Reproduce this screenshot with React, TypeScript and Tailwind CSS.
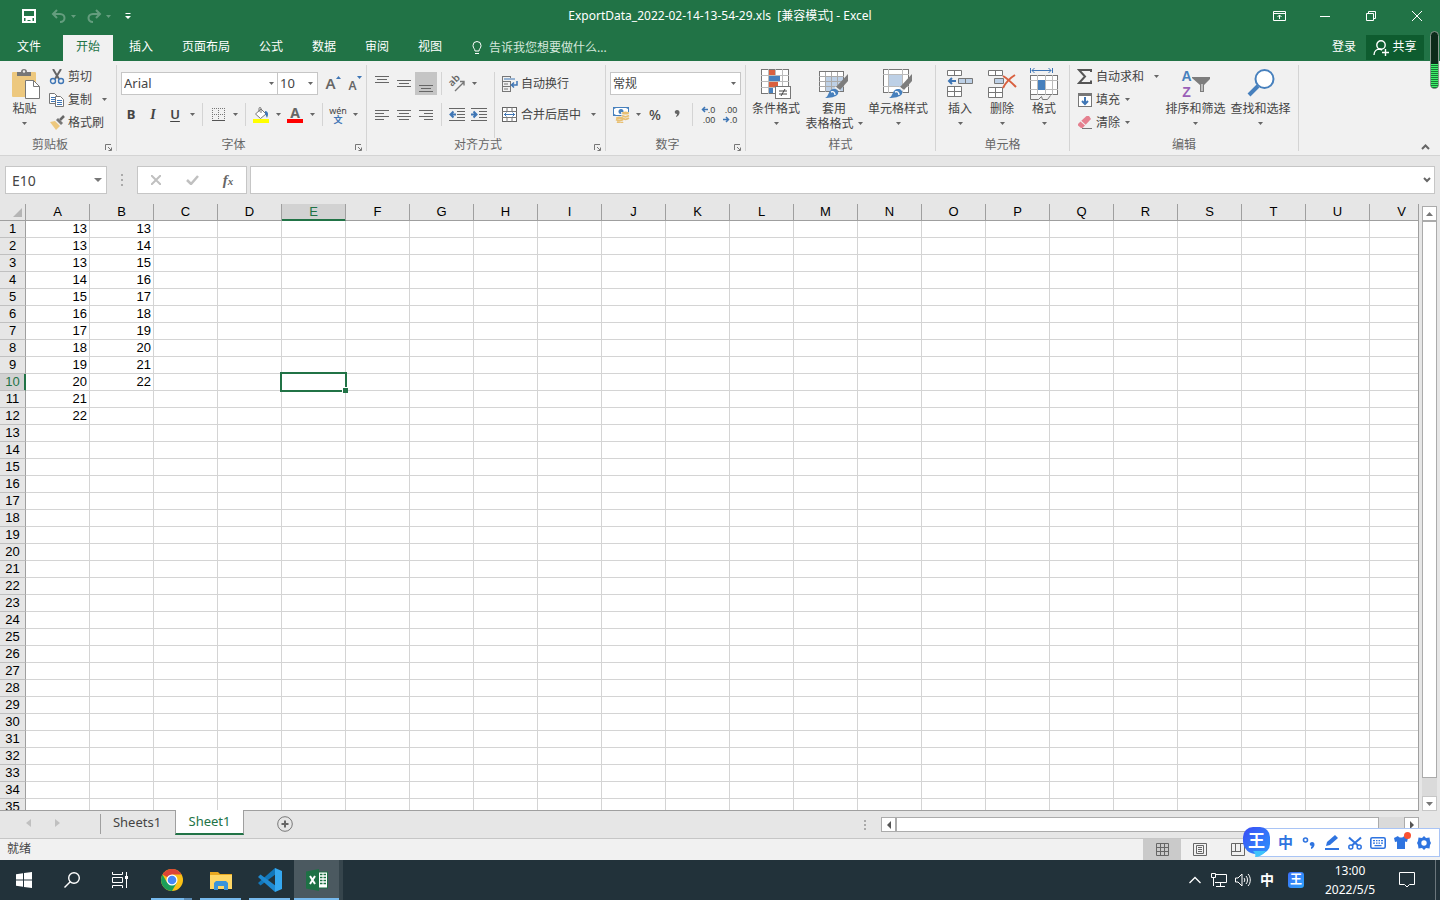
import { useState, type ReactNode } from 'react'

const TABS = ['开始', '插入', '页面布局', '公式', '数据', '审阅', '视图']
const COLUMNS = 'ABCDEFGHIJKLMNOPQRSTUV'.split('')
const ROWS = Array.from({ length: 35 }, (_, i) => i + 1)
const DATA: Record<string, number[]> = {
  A: [13, 13, 13, 14, 15, 16, 17, 18, 19, 20, 21, 22],
  B: [13, 14, 15, 16, 17, 18, 19, 20, 21, 22],
}
const ACTIVE = { col: 'E', row: 10 }

function Caret({ className = 'fill-[#666]' }: { className?: string }) {
  return (
    <svg width="5" height="3" viewBox="0 0 5 3" className={`shrink-0 ${className}`} aria-hidden="true">
      <path d="M0 0h5L2.5 3z" />
    </svg>
  )
}

function Icon({ w = 16, h = 16, children }: { w?: number; h?: number; children: ReactNode }) {
  return (
    <svg width={w} height={h} viewBox={`0 0 ${w} ${h}`} fill="none" className="shrink-0" aria-hidden="true">
      {children}
    </svg>
  )
}

function Tool({ label, active, children }: { label: string; active?: boolean; children: ReactNode }) {
  return (
    <button
      aria-label={label}
      className={`flex h-[23px] w-[22px] shrink-0 items-center justify-center ${active ? 'bg-[#c5c5c5]' : 'hover:bg-[#d5d5d5]'}`}
    >
      {children}
    </button>
  )
}

function DropArrow({ label }: { label: string }) {
  return (
    <button aria-label={label} className="flex h-[23px] w-3 shrink-0 items-center justify-center hover:bg-[#d5d5d5]">
      <Caret />
    </button>
  )
}

function Sep() {
  return <span className="mx-1 w-px shrink-0 self-stretch bg-[#d4d4d4]" />
}

function Group({ title, width, launcher, children }: { title: string; width: string; launcher?: boolean; children: ReactNode }) {
  return (
    <section aria-label={title} className={`flex h-[86px] shrink-0 flex-col border-r border-[#d4d4d4] ${width}`}>
      <div className="flex flex-1">{children}</div>
      <div className="flex h-[13px] items-center text-[#666]">
        <span className="flex-1 text-center leading-[13px]">{title}</span>
        {launcher && (
          <button aria-label={`${title}设置`} className="flex w-4 justify-center self-end">
            <Icon w={7} h={7}>
              <path d="M.5 6V.5H6M3 3l3 3M6.5 3.5v3h-3" stroke="#777" />
            </Icon>
          </button>
        )}
      </div>
    </section>
  )
}

function SmallButton({ icon, text, arrow }: { icon: ReactNode; text: string; arrow?: boolean }) {
  return (
    <button className="flex h-[23px] items-center gap-[3px] whitespace-nowrap hover:bg-[#d5d5d5]">
      {icon}
      <span>{text}</span>
      {arrow && <span className="pl-[2px]"><Caret /></span>}
    </button>
  )
}

function BigButton({ icon, text, second, width }: { icon: ReactNode; text: string; second?: string; width: string }) {
  return (
    <button className={`flex shrink-0 flex-col items-center whitespace-nowrap pt-1 leading-[15px] hover:bg-[#d5d5d5] ${width}`}>
      <span className="flex h-[30px] items-center">{icon}</span>
      <span className="mt-[2px]">{text}</span>
      <span className="flex h-[15px] items-center gap-1">
        {second}
        <Caret />
      </span>
    </button>
  )
}

function Lines({ y, widths, align = 'center' }: { y: number; widths: number[]; align?: 'left' | 'center' | 'right' }) {
  return (
    <Icon w={14} h={16}>
      {widths.map((w, i) => (
        <rect
          key={i}
          x={align === 'left' ? 0 : align === 'right' ? 14 - w : (14 - w) / 2}
          y={y + i * 3}
          width={w}
          height="1"
          fill="#666"
        />
      ))}
    </Icon>
  )
}

function Indent({ out }: { out?: boolean }) {
  return (
    <Icon w={16} h={14}>
      <path d="M0 .5h16M8 3.500h8M8 6.500h8M8 9.500h8M0 12.500h16" stroke="#666" />
      {out ? (
        <path d="M7 6.500H2M4.500 3.500l-3 3 3 3" stroke="#3f76b5" strokeWidth="2" />
      ) : (
        <path d="M0 6.500h5M2.500 3.500l3 3-3 3" stroke="#3f76b5" strokeWidth="2" />
      )}
    </Icon>
  )
}

function Brush() {
  return (
    <g>
      <path d="M29 5v7l-8 9-4-3z" fill="#7d7d7d" />
      <path d="M16 18l5 4" stroke="#f1f1f1" strokeWidth="1.5" />
      <path d="M6 29c4-1 3-9 9-9 3 0 5 2 4 5-2 3-8 4-13 4z" fill="#4780bd" />
      <path d="M12 23c2-1 4 0 4 3" stroke="#fff" strokeWidth="1.4" />
    </g>
  )
}

function Clipboard() {
  return (
    <Group title="剪贴板" width="w-[117px]" launcher>
      <BigButton
        width="w-[49px]"
        text="粘贴"
        icon={
          <Icon w={30} h={30}>
            <rect x="2" y="3" width="24" height="25" rx="1" fill="#edc87e" />
            <path d="M7 7V3h4a3 3 0 0 1 6 0h4v4z" fill="#777" />
            <circle cx="14" cy="2.5" r="1.2" fill="#f1f1f1" />
            <path d="M15.500 11.500h8l6 6v12h-14z" fill="#fff" stroke="#777" />
            <path d="M23.500 11.500v6h6" stroke="#777" />
          </Icon>
        }
      />
      <div className="flex flex-col items-start">
        <SmallButton
          text="剪切"
          icon={
            <Icon>
              <path d="M4 0l6 10M12 0L6 10" stroke="#666" strokeWidth="2" />
              <circle cx="4" cy="12" r="2.500" stroke="#3f76b5" strokeWidth="1.400" />
              <circle cx="12" cy="12" r="2.500" stroke="#3f76b5" strokeWidth="1.400" />
            </Icon>
          }
        />
        <div className="flex items-center">
          <SmallButton
            text="复制"
            icon={
              <Icon>
                <path d="M.5 1.500h5l3 3v7h-8z" fill="#fff" stroke="#777" />
                <path d="M2 5.500h4M2 7.500h4M2 9.500h4" stroke="#3f76b5" />
                <path d="M6.500 4.500h5l3 3v7h-8z" fill="#fff" stroke="#777" />
                <path d="M8 8.500h5M8 10.500h5M8 12.500h5" stroke="#3f76b5" />
              </Icon>
            }
          />
          <span className="pl-1.5">
            <DropArrow label="复制选项" />
          </span>
        </div>
        <SmallButton
          text="格式刷"
          icon={
            <Icon>
              <path d="M1 7l5-1 5 5-4 4z" fill="#edc87e" />
              <path d="M7 5l2-2 5 5-2 2z" fill="#777" />
              <path d="M11 5l4-4" stroke="#666" strokeWidth="2.500" />
            </Icon>
          }
        />
      </div>
    </Group>
  )
}

function FontGroup() {
  return (
    <Group title="字体" width="w-[250px]" launcher>
      <div className="flex flex-col gap-2 pl-[3px] pt-[7px]">
        <div className="flex h-[23px] pl-px">
          <div className="relative flex w-[157px] items-center">
            <select aria-label="字体" className="h-full w-full appearance-none border border-[#c6c6c6] bg-white px-[2px] text-[13px]">
              <option>Arial</option>
            </select>
            <span className="pointer-events-none absolute right-1"><Caret /></span>
          </div>
          <div className="relative -ml-px flex w-[41px] items-center">
            <select aria-label="字号" className="h-full w-full appearance-none border border-[#c6c6c6] bg-white px-[2px] text-[13px]">
              <option>10</option>
            </select>
            <span className="pointer-events-none absolute right-[5px]"><Caret /></span>
          </div>
          <span className="w-1" />
          <Tool label="增大字号">
            <span className="text-[15px] font-semibold text-[#666]">A</span>
            <span className="self-start pt-1"><Icon w={5} h={3}><path d="M0 3h5L2.500 0z" fill="#3f76b5" /></Icon></span>
          </Tool>
          <Tool label="减小字号">
            <span className="pt-1 text-[12px] font-semibold text-[#666]">A</span>
            <span className="self-start pt-1"><Caret className="fill-[#3f76b5]" /></span>
          </Tool>
        </div>
        <div className="flex">
          <Tool label="加粗"><b className="text-[13px]">B</b></Tool>
          <Tool label="倾斜"><i className="font-['Liberation_Serif',serif] text-[14px] font-bold">I</i></Tool>
          <Tool label="下划线"><span className="text-[13px] font-semibold underline underline-offset-2">U</span></Tool>
          <DropArrow label="下划线选项" />
          <Sep />
          <Tool label="边框">
            <Icon w={13} h={14}>
              <path d="M.5 0v12M6.500 0v12M12.500 0v12M0 .5h13M0 6.500h13" stroke="#777" strokeDasharray="1 1" />
              <path d="M0 12.500h13" stroke="#555" />
            </Icon>
          </Tool>
          <DropArrow label="边框选项" />
          <Sep />
          <Tool label="填充颜色">
            <Icon w={16} h={16}>
              <path d="M2.500 7L8 2l5 5-5.500 4.500z" fill="#fff" stroke="#777" />
              <path d="M6 5V1.500a1 1 0 0 1 2 0V6" stroke="#777" />
              <path d="M12 4c3 0 4 3 2 7-1-2-1-3-2-4z" fill="#3f76b5" />
              <rect y="12" width="16" height="4" fill="#ff0" />
            </Icon>
          </Tool>
          <DropArrow label="填充颜色选项" />
          <Tool label="字体颜色">
            <span className="border-b-4 border-[#f00] px-[3px] text-[14px] font-bold leading-[13px] text-[#666]">A</span>
          </Tool>
          <DropArrow label="字体颜色选项" />
          <Sep />
          <button aria-label="拼音指南" className="flex h-[23px] w-[22px] flex-col items-center justify-center hover:bg-[#d5d5d5]">
            <span className="text-[9px] leading-[9px]">wén</span>
            <span className="text-[9px] font-bold leading-[9px] text-[#3f76b5]">文</span>
          </button>
          <DropArrow label="拼音选项" />
        </div>
      </div>
    </Group>
  )
}

function AlignGroup() {
  return (
    <Group title="对齐方式" width="w-[239px]" launcher>
      <div className="flex items-start pl-1 pt-[7px]">
        <div className="flex flex-col gap-2">
          <div className="flex">
            <Tool label="顶端对齐"><Lines y={0} widths={[14, 10, 14]} /></Tool>
            <Tool label="垂直居中"><Lines y={4} widths={[14, 10, 14]} /></Tool>
            <Tool label="底端对齐" active><Lines y={9} widths={[14, 10, 14]} /></Tool>
            <Sep />
            <Tool label="方向">
              <Icon w={18} h={18}>
                <text x="4" y="12" transform="rotate(-45 4 12)" fontSize="10" fontWeight="600" fill="#666">ab</text>
                <path d="M7 16l9-9M12 6.500h4v4" stroke="#777" strokeWidth="1.400" />
              </Icon>
            </Tool>
            <DropArrow label="方向选项" />
          </div>
          <div className="flex">
            <Tool label="左对齐"><Lines y={3} widths={[14, 9, 14, 9]} align="left" /></Tool>
            <Tool label="居中"><Lines y={3} widths={[14, 10, 14, 10]} /></Tool>
            <Tool label="右对齐"><Lines y={3} widths={[14, 9, 14, 9]} align="right" /></Tool>
            <Sep />
            <Tool label="减少缩进量"><Indent out /></Tool>
            <Tool label="增加缩进量"><Indent /></Tool>
          </div>
        </div>
        <Sep />
        <div className="flex flex-col items-start gap-2 pl-[3px]">
          <SmallButton
            text="自动换行"
            icon={
              <Icon>
                <path d="M.5 0v16M0 .5h9M0 5.500h9M0 10.500h9M0 15.500h9M8.500 5v11M8.500 0v2" stroke="#777" />
                <path d="M2 3h11" stroke="#3f76b5" />
                <path d="M2 8h4M2 13h4" stroke="#777" />
                <path d="M15 5v4h-5M12 6.500L9.500 9l2.500 2.500" stroke="#3f76b5" strokeWidth="1.500" />
              </Icon>
            }
          />
          <div className="flex items-center">
            <SmallButton
              text="合并后居中"
              icon={
                <Icon>
                  <rect x=".5" y=".5" width="14" height="14" fill="#fff" stroke="#666" />
                  <path d="M0 4.500h15M0 10.500h15M5 0v4M10 0v4M5 11v4M10 11v4" stroke="#777" />
                  <path d="M2 7.500h11M4.500 5.500l-2 2 2 2M10.500 5.500l2 2-2 2" stroke="#3f76b5" />
                </Icon>
              }
            />
            <span className="pl-1.5"><DropArrow label="合并选项" /></span>
          </div>
        </div>
      </div>
    </Group>
  )
}

function NumberGroup() {
  return (
    <Group title="数字" width="w-[140px]" launcher>
      <div className="flex flex-col gap-2 pl-1 pt-[7px]">
        <div className="relative flex h-[23px] w-[131px] items-center">
          <select aria-label="数字格式" className="h-full w-full appearance-none border border-[#c6c6c6] bg-white px-[2px]">
            <option>常规</option>
          </select>
          <span className="pointer-events-none absolute right-[5px]"><Caret /></span>
        </div>
        <div className="flex">
          <Tool label="会计数字格式">
            <Icon w={18} h={17}>
              <rect x="1" y="1" width="16" height="9" fill="#4780bd" />
              <path d="M2 3l2-1h10l2 1v4l-2 2H4L2 8z" fill="#fff" />
              <circle cx="9" cy="5.500" r="2.500" fill="#4780bd" />
              <path d="M9 6h8v7a4 2 0 0 1-7 0z" fill="#f1f1f1" />
              <ellipse cx="13.500" cy="7" rx="3.500" ry="1.500" fill="#e8bf72" />
              <path d="M10 9.500c2 1.500 5 1.500 7 0M10 12c2 1.500 5 1.500 7 0M4 13.500c2 1.500 5 1.500 7 0M5 16c2 1 5 1 6 0" stroke="#e8bf72" strokeWidth="1.600" />
              <ellipse cx="7.500" cy="12" rx="3.500" ry="1.500" fill="#e8bf72" />
            </Icon>
          </Tool>
          <DropArrow label="会计格式选项" />
          <Tool label="百分比样式"><span className="text-[14px] font-medium">%</span></Tool>
          <Tool label="千位分隔样式">
            <Icon w={6} h={10}><path d="M3 0c4 0 3 6-1 7V6c1-1 1-1 1-2-3 0-3-4 0-4z" fill="#666" /></Icon>
          </Tool>
          <Sep />
          <Tool label="增加小数位数">
            <span className="flex flex-col items-end font-['Liberation_Sans',Arial,sans-serif] text-[9px] leading-[10px]">
              <span className="flex items-center"><Icon w={7} h={7}><path d="M7 3.500H2M4 1L1.500 3.500 4 6" stroke="#3f76b5" strokeWidth="1.500" /></Icon>.0</span>
              <span>.00</span>
            </span>
          </Tool>
          <Tool label="减少小数位数">
            <span className="flex flex-col items-end font-['Liberation_Sans',Arial,sans-serif] text-[9px] leading-[10px]">
              <span>.00</span>
              <span className="flex items-center"><Icon w={7} h={7}><path d="M0 3.500h5M3 1l2.500 2.500L3 6" stroke="#3f76b5" strokeWidth="1.500" /></Icon>.0</span>
            </span>
          </Tool>
        </div>
      </div>
    </Group>
  )
}

function StyleGroup() {
  return (
    <Group title="样式" width="w-[190px]">
      <BigButton
        width="w-[60px]"
        text="条件格式"
        icon={
          <Icon w={30} h={30}>
            <rect x=".5" y=".5" width="27" height="24" fill="#fff" stroke="#777" />
            <path d="M0 6.500h28M0 12.500h28M0 18.500h28M7.500 0v25M14.500 0v25M21.500 0v25" stroke="#bbb" />
            <path d="M8 1h6v5H8zM8 13h9v5H8z" fill="#d9603f" />
            <path d="M8 7h11v5H8zM8 19h4v5H8z" fill="#4780bd" />
            <rect x="14.500" y="17.500" width="15" height="12" fill="#fff" stroke="#777" />
            <path d="M18 22h8M18 25h8M24 20l-4 7" stroke="#444" />
          </Icon>
        }
      />
      <BigButton
        width="w-[56px]"
        text="套用"
        second="表格格式"
        icon={
          <Icon w={30} h={30}>
            <rect x=".5" y="2.500" width="24" height="20" fill="#fff" stroke="#777" />
            <path d="M6 8h18v14H6z" fill="#bdd0e6" />
            <path d="M0 7.500h25M0 12.500h25M0 17.500h25M6.500 3v20M12.500 3v20M18.500 3v20" stroke="#aaa" />
            <Brush />
          </Icon>
        }
      />
      <BigButton
        width="w-[72px]"
        text="单元格样式"
        icon={
          <Icon w={30} h={30}>
            <rect x=".5" y=".5" width="25" height="23" fill="#fff" stroke="#777" />
            <path d="M0 5.500h26M0 17.500h26M5.500 0v24M19.500 0v24" stroke="#bbb" />
            <rect x="6" y="6" width="13" height="11" fill="#bdd0e6" />
            <Brush />
          </Icon>
        }
      />
    </Group>
  )
}

function CellsGroup() {
  return (
    <Group title="单元格" width="w-[134px]">
      <div className="flex pl-[3px]">
        <BigButton
          width="w-[42px]"
          text="插入"
          icon={
            <Icon w={28} h={30}>
              <path d="M1.500 1.500h14v5h-14zM8.500 1v6M1.500 17.500h14v10h-14zM1 22.500h15M8.500 17v11" fill="#fff" stroke="#777" />
              <path d="M12.500 9.500h14v5h-14zM19.500 9v6" fill="#bdd0e6" stroke="#777" />
              <path d="M10 12H4M6 9l-3 3 3 3" stroke="#3f76b5" strokeWidth="2" />
            </Icon>
          }
        />
        <BigButton
          width="w-[42px]"
          text="删除"
          icon={
            <Icon w={30} h={30}>
              <path d="M1.500 1.500h14v5h-14zM8.500 1v6M1.500 18.500h14v10h-14zM1 23.500h15M8.500 18v11" fill="#fff" stroke="#777" />
              <path d="M7.500 9.500h9v5h-9z" fill="#bdd0e6" stroke="#777" />
              <path d="M16 7c5 3 9 7 13 11M28 6c-5 3-9 7-12 13" stroke="#d9603f" strokeWidth="2" />
            </Icon>
          }
        />
        <BigButton
          width="w-[42px]"
          text="格式"
          icon={
            <Icon w={28} h={32}>
              <path d="M.5 0v5M22.500 0v5M2 2.500h19M4.500 0L2 2.500 4.500 5M18.500 0L21 2.500 18.500 5" stroke="#3f76b5" />
              <rect x=".5" y="7.500" width="27" height="19" fill="#fff" stroke="#777" />
              <path d="M0 12.500h28M0 21.500h28M7.500 7v20M15.500 7v20M22.500 7v20" stroke="#bbb" />
              <rect x="8" y="12" width="7" height="10" fill="#4780bd" />
              <path d="M.5 27v4.500h8l3-3 1 3h5l3-4" stroke="#777" />
            </Icon>
          }
        />
      </div>
    </Group>
  )
}

function EditGroup() {
  return (
    <Group title="编辑" width="w-[229px]">
      <div className="flex w-[93px] flex-col items-start pl-[7px]">
        <div className="flex items-center">
          <SmallButton
            text="自动求和"
            icon={<Icon><path d="M14 3V1H2l6 6.500L2 14h12v-2.500" stroke="#555" strokeWidth="2" /></Icon>}
          />
          <span className="pl-1.5"><DropArrow label="求和选项" /></span>
        </div>
        <SmallButton
          text="填充"
          arrow
          icon={
            <Icon>
              <rect x="1.500" y="1.500" width="13" height="13" fill="#fff" stroke="#777" />
              <rect x="1" y="1" width="14" height="3" fill="#777" />
              <path d="M8 5v7M5 9l3 3 3-3" stroke="#3f76b5" strokeWidth="2" />
            </Icon>
          }
        />
        <SmallButton
          text="清除"
          arrow
          icon={
            <Icon>
              <path d="M1 9l2.500-2.500 4.500 4L5.500 13H4L1 10.500z" fill="#e5808f" />
              <path d="M4.300 5.700L9.500 1H12l2 3-5.300 5.800z" fill="#e5808f" />
              <path d="M5 13.500h10" stroke="#777" />
            </Icon>
          }
        />
      </div>
      <BigButton
        width="w-[65px]"
        text="排序和筛选"
        icon={
          <span className="flex items-center">
            <span className="flex flex-col items-center font-['Liberation_Sans',Arial,sans-serif] text-[14px] font-bold leading-4">
              <span className="text-[#4780bd]">A</span>
              <span className="text-[#9a5fb8]">Z</span>
            </span>
            <Icon w={18} h={16}>
              <path d="M0 1h18v2l-6 6v7H8V9L0 2z" fill="#7d7d7d" />
              <path d="M9.500 8h1v7h-1z" fill="#fff" />
            </Icon>
          </span>
        }
      />
      <BigButton
        width="w-[65px]"
        text="查找和选择"
        icon={
          <Icon w={28} h={30}>
            <circle cx="17.500" cy="10" r="9" fill="#fff" stroke="#4780bd" strokeWidth="2" />
            <path d="M11 17l-9 9" stroke="#4780bd" strokeWidth="4" />
          </Icon>
        }
      />
    </Group>
  )
}

function TitleBar() {
  return (
    <header className="flex h-[35px] shrink-0 items-center pb-[3px] text-white">
      <div className="flex-1">
        <div className="flex items-center gap-[10px] pl-[22px]">
          <button aria-label="保存" className="w-[19px]">
            <Icon w={14} h={14}>
              <path d="M1 1h12v12H1zM1 8h12M4.500 13v-3h5v3" stroke="#fff" strokeWidth="2" />
            </Icon>
          </button>
          <button aria-label="撤消" className="flex items-center gap-1 opacity-30">
            <Icon w={16} h={14}>
              <path d="M6 1L2 5l4 4M2 5h7c6 0 6 8 0 8" stroke="#fff" strokeWidth="2" />
            </Icon>
            <Caret className="fill-white" />
          </button>
          <button aria-label="恢复" className="flex items-center gap-1 opacity-30">
            <Icon w={16} h={14}>
              <path d="M10 1l4 4-4 4M14 5H7c-6 0-6 8 0 8" stroke="#fff" strokeWidth="2" />
            </Icon>
            <Caret className="fill-white" />
          </button>
          <button aria-label="自定义快速访问工具栏" className="pl-1">
            <Icon w={6} h={6}><path d="M.5 0h5v1h-5zM0 3h6L3 6z" fill="#fff" /></Icon>
          </button>
        </div>
      </div>
      <h1 className="whitespace-pre">ExportData_2022-02-14-13-54-29.xls  [兼容模式] - Excel</h1>
      <div className="flex flex-1 justify-end">
        <button aria-label="功能区显示选项" className="flex h-[30px] w-[46px] items-center justify-center">
          <Icon w={13} h={10}><path d="M.5.5h12v9H.5zM0 2.500h13M6.500 8V4M4.500 6l2-2 2 2" stroke="#fff" /></Icon>
        </button>
        <button aria-label="最小化" className="flex h-[30px] w-[46px] items-center justify-center">
          <Icon w={10} h={10}><path d="M0 5.500h10" stroke="#fff" /></Icon>
        </button>
        <button aria-label="还原" className="flex h-[30px] w-[46px] items-center justify-center">
          <Icon w={10} h={10}><path d="M.5 2.500h7v7h-7zM2.500 2.500v-2h7v7h-2" stroke="#fff" /></Icon>
        </button>
        <button aria-label="关闭" className="flex h-[30px] w-[46px] items-center justify-center">
          <Icon w={10} h={10}><path d="M0 0l10 10M10 0L0 10" stroke="#fff" /></Icon>
        </button>
      </div>
    </header>
  )
}

function RibbonTabs() {
  const [tab, setTab] = useState(TABS[0])
  return (
    <nav className="flex h-[26px] shrink-0 items-stretch text-white">
      <button className="mr-[5px] w-[58px] pb-[2px]">文件</button>
      <div className="flex gap-[3px]">
        {TABS.map(name => (
          <button
            key={name}
            onClick={() => setTab(name)}
            className={`whitespace-nowrap px-[13px] pb-[2px] ${tab === name ? 'bg-[#f1f1f1] text-[#217346]' : 'hover:bg-[#3b8a5d]'}`}
          >
            {name}
          </button>
        ))}
      </div>
      <button className="ml-4 flex items-center gap-1.5 text-[#d5e8dc]">
        <Icon w={12} h={14}>
          <path d="M4 10c0-2-2-3-2-5.500a4 4 0 0 1 8 0C10 7 8 8 8 10zM4 12.500h4" stroke="#fff" />
        </Icon>
        告诉我您想要做什么...
      </button>
      <div className="ml-auto flex pr-4">
        <button className="px-[10px] pb-[2px]">登录</button>
        <button className="flex h-[25px] w-[58px] items-center justify-center gap-[3px] bg-[#0e5c2f]">
          <Icon w={16} h={16}>
            <circle cx="8" cy="5" r="4.200" stroke="#fff" strokeWidth="1.400" />
            <path d="M1 15c0-4 3-6 6-6l2 1M12.500 9v7M9 12.500h7" stroke="#fff" strokeWidth="1.400" />
          </Icon>
          <span className="pb-[2px]">共享</span>
        </button>
      </div>
    </nav>
  )
}

function FormulaBar() {
  return (
    <div className="flex h-12 shrink-0 items-center gap-[3px] px-[5px]">
      <div className="relative flex w-[102px] items-center">
        <input aria-label="名称框" defaultValue="E10" className="h-7 w-full border border-[#c6c6c6] bg-white px-1.5 text-[14px] text-[#444] outline-none" />
        <button aria-label="名称列表" className="absolute right-[5px]">
          <svg width="8" height="4" viewBox="0 0 8 4" className="fill-[#777]"><path d="M0 0h8L4 4z" /></svg>
        </button>
      </div>
      <span className="flex w-6 justify-center">
        <Icon w={2} h={12}><path d="M1 0v2M1 5v2M1 10v2" stroke="#aaa" strokeWidth="2" /></Icon>
      </span>
      <div className="flex h-7 w-[110px] items-center border border-[#c6c6c6] bg-white">
        <button aria-label="取消" className="flex flex-1 justify-center"><Icon w={10} h={10}><path d="M0 0l10 10M10 0L0 10" stroke="#c0c0c0" strokeWidth="2" /></Icon></button>
        <button aria-label="输入" className="flex flex-1 justify-center"><Icon w={13} h={10}><path d="M1 5l4 4 7-8" stroke="#c0c0c0" strokeWidth="2.500" /></Icon></button>
        <button aria-label="插入函数" className="flex-1 font-['Liberation_Serif',serif] text-[15px] font-bold italic text-[#666]">f<span className="text-[11px]">x</span></button>
      </div>
      <div className="relative flex flex-1 items-center">
        <input aria-label="编辑栏" className="h-7 w-full border border-[#c6c6c6] bg-white px-1.5 outline-none" />
        <button aria-label="展开编辑栏" className="absolute right-1">
          <Icon w={8} h={6}><path d="M1 1l3 3 3-3" stroke="#666" strokeWidth="2" /></Icon>
        </button>
      </div>
    </div>
  )
}

function Sheet() {
  return (
    <div className="flex min-h-0 flex-1">
      <div className="min-w-0 flex-1 overflow-hidden border-b border-r border-[#9f9f9f]">
        <table className="w-[1434px] table-fixed border-separate border-spacing-0 bg-white font-['Liberation_Sans',Arial,sans-serif] text-[13px] leading-4 text-black">
          <colgroup>
            <col className="w-[26px]" />
            {COLUMNS.map(c => <col key={c} className="w-16" />)}
          </colgroup>
          <thead>
            <tr>
              <th aria-label="全选" className="h-[17px] border-b border-r border-[#9f9f9f] bg-[#e6e6e6] p-0">
                <span className="flex justify-end pr-[3px]"><Icon w={9} h={9}><path d="M9 0v9H0z" fill="#b5b5b5" /></Icon></span>
              </th>
              {COLUMNS.map(c => (
                <th
                  key={c}
                  className={`h-[17px] border-b border-r p-0 font-normal ${
                    c === ACTIVE.col
                      ? 'border-b-[#217346] border-r-[#9f9f9f] bg-[#d2d2d2] text-[#217346] shadow-[inset_0_-1px_0_#217346]'
                      : 'border-[#9f9f9f] bg-[#e6e6e6]'
                  }`}
                >
                  {c}
                </th>
              ))}
            </tr>
          </thead>
          <tbody>
            {ROWS.map(r => (
              <tr key={r}>
                <th
                  className={`h-[17px] border-b border-r border-b-[#c0c0c0] p-0 font-normal ${
                    r === ACTIVE.row
                      ? 'border-r-[#217346] bg-[#d2d2d2] text-[#217346] shadow-[inset_-1px_0_0_#217346]'
                      : 'border-r-[#9f9f9f] bg-[#e6e6e6]'
                  }`}
                >
                  {r}
                </th>
                {COLUMNS.map(c => (
                  <td key={c} className="relative h-[17px] border-b border-r border-[#d4d4d4] p-0 pr-[2px] text-right">
                    {DATA[c]?.[r - 1]}
                    {c === ACTIVE.col && r === ACTIVE.row && (
                      <span className="absolute -inset-[2px] z-10 border-2 border-[#217346]">
                        <span className="absolute -bottom-[3px] -right-[3px] h-1.5 w-1.5 border-l border-t border-white bg-[#217346]" />
                      </span>
                    )}
                  </td>
                ))}
              </tr>
            ))}
          </tbody>
        </table>
      </div>
      <div className="flex w-[21px] flex-col px-[3px] pt-[2px]">
        <button aria-label="向上滚动" className="flex h-[15px] shrink-0 items-center justify-center border border-[#ababab] bg-white">
          <Icon w={7} h={4}><path d="M0 4h7L3.500 0z" fill="#777" /></Icon>
        </button>
        <div className="flex-1 bg-[#dadada] pb-[18px]">
          <div className="h-full border border-[#ababab] bg-white" />
        </div>
        <button aria-label="向下滚动" className="flex h-[15px] shrink-0 items-center justify-center border border-[#c6c6c6] bg-white">
          <Icon w={7} h={4}><path d="M0 0h7L3.500 4z" fill="#777" /></Icon>
        </button>
      </div>
    </div>
  )
}

function SheetTabs() {
  return (
    <div className="flex h-[27px] shrink-0 items-start text-[13px]">
      <div className="flex w-[100px] items-center gap-6 pl-[26px] pt-2">
        <button aria-label="上一个工作表"><Icon w={5} h={8}><path d="M5 0v8L0 4z" fill="#c0c0c0" /></Icon></button>
        <button aria-label="下一个工作表"><Icon w={5} h={8}><path d="M0 0v8l5-4z" fill="#c0c0c0" /></Icon></button>
      </div>
      <button className="mt-[3px] h-5 w-[75px] border-l border-[#9f9f9f] pb-[3px] pr-[2px] leading-[17px]">Sheets1</button>
      <button className="relative z-10 -mt-px h-[25px] w-[69px] border-x border-b-2 border-x-[#9f9f9f] border-b-[#217346] bg-white pt-px text-[#217346]">Sheet1</button>
      <button aria-label="新工作表" className="ml-[33px] mt-[5px]">
        <Icon>
          <circle cx="8" cy="8" r="7.300" stroke="#777" />
          <path d="M4.500 8h7M8 4.500v7" stroke="#666" strokeWidth="2" />
        </Icon>
      </button>
      <div className="ml-auto flex w-[579px] items-center pr-[21px] pt-1.5">
        <span className="mr-[15px] pl-[3px]">
          <Icon w={2} h={12}><path d="M1 1v2M1 5v2M1 9v2" stroke="#aaa" strokeWidth="2" /></Icon>
        </span>
        <button aria-label="向左滚动" className="flex h-[15px] w-[15px] items-center justify-center border border-[#ababab] bg-white">
          <Icon w={4} h={8}><path d="M4 0v8L0 4z" fill="#555" /></Icon>
        </button>
        <div className="flex h-[15px] flex-1 bg-[#dadada] pr-[25px]">
          <div className="w-full border border-[#ababab] bg-white" />
        </div>
        <button aria-label="向右滚动" className="flex h-[15px] w-[15px] items-center justify-center border border-[#ababab] bg-white">
          <Icon w={4} h={8}><path d="M0 0v8l4-4z" fill="#555" /></Icon>
        </button>
      </div>
    </div>
  )
}

function StatusBar() {
  return (
    <footer className="flex h-[22px] shrink-0 items-stretch justify-between border-t border-[#c6c6c6] bg-[#f1f1f1] pl-[7px] pr-[183px]">
      <span className="leading-[19px]">就绪</span>
      <div className="flex">
        <button aria-label="普通" className="flex w-[38px] items-center justify-center bg-[#cacaca]">
          <Icon w={13} h={13}><path d="M.5.5h12v12H.5zM0 4.500h13M0 8.500h13M4.500 0v13M8.500 0v13" stroke="#666" /></Icon>
        </button>
        <button aria-label="页面布局视图" className="flex w-[38px] items-center justify-center">
          <Icon w={14} h={13}><path d="M.5.5h13v12H.5zM3.500 2.500h7v8h-7zM5 4.500h4M5 6.500h4M5 8.500h4" stroke="#666" /></Icon>
        </button>
        <button aria-label="分页预览" className="flex w-[38px] items-center justify-center">
          <Icon w={14} h={13}><path d="M.5.5h13v12H.5zM4.500 0v8M9.500 0v8M0 8.500h10" stroke="#666" /></Icon>
        </button>
      </div>
    </footer>
  )
}

function InputBar() {
  return (
    <div className="absolute bottom-[43px] right-0 z-20 flex h-[29px] w-[184px] items-center border border-[#a9c4f5] bg-white pl-[17px] text-[#2f74e0]">
      <span className="absolute -left-[14px] -top-[2px] flex h-[27px] w-[27px] items-center justify-center rounded-[10px] rounded-bl-[13px] bg-gradient-to-br from-[#3a49f5] to-[#2f93fb] text-[17px] font-bold leading-none text-white">
        <span className="absolute -bottom-[3px] left-[10px]">
          <Icon w={13} h={6}><path d="M0 0h13c-3 4-7 6-11 6 1-2 0-4-2-6z" fill="#3fc3fb" /></Icon>
        </span>
        <span className="relative">王</span>
      </span>
      <button className="w-[23px] pb-px text-[15px] font-bold leading-none">中</button>
      <button aria-label="标点" className="flex w-[23px] justify-center">
        <Icon w={14} h={14}>
          <circle cx="3.500" cy="4" r="2" stroke="currentColor" strokeWidth="1.600" />
          <path d="M10 6c4 0 3 6-1 7V11l1-1c-3 0-3-4 0-4z" fill="currentColor" />
        </Icon>
      </button>
      <button aria-label="手写" className="flex w-[23px] justify-center">
        <Icon w={14} h={15}>
          <path d="M1 11l1-4 8-7 3 3-8 7z" fill="currentColor" />
          <path d="M0 14h14" stroke="currentColor" strokeWidth="2" />
        </Icon>
      </button>
      <button aria-label="截图" className="flex w-[23px] justify-center">
        <Icon w={14} h={14}>
          <path d="M1 1.500c3 3 7 6 9 8M13 1.500c-3 3-7 6-9 8" stroke="currentColor" strokeWidth="2" />
          <circle cx="2.800" cy="11" r="2" stroke="currentColor" strokeWidth="1.500" />
          <circle cx="11.200" cy="11" r="2" stroke="currentColor" strokeWidth="1.500" />
        </Icon>
      </button>
      <button aria-label="软键盘" className="flex w-[23px] justify-center">
        <Icon w={16} h={12}>
          <rect x=".8" y=".8" width="14.400" height="10.400" rx="1.500" stroke="currentColor" strokeWidth="1.600" />
          <path d="M3 3.700h2M6 3.700h1.500M8.500 3.700H10M11 3.700h2M3 6.200h2M6 6.200h1.500M8.500 6.200H10M11 6.200h2M4.500 8.700h7" stroke="currentColor" strokeWidth="1.300" />
        </Icon>
      </button>
      <button aria-label="皮肤" className="relative flex w-[23px] justify-center">
        <Icon w={14} h={13}>
          <path d="M4 0c1 2 5 2 6 0l4 2-1 4-2-.5V13H3V5.500L1 6 0 2z" fill="currentColor" />
        </Icon>
        <span className="absolute -top-1 right-[1px] h-[7px] w-[7px] rounded-full bg-[#fa5131]" />
      </button>
      <button aria-label="设置" className="flex w-[23px] justify-center">
        <Icon w={14} h={14}>
          <path d="M7 0l2 2 3.500-.5.5 3.500 1 2-1 2-.5 3.500L9 12l-2 2-2-2-3.500.5L1 9 0 7l1-2 .5-3.500L5 2z" fill="currentColor" />
          <circle cx="7" cy="7" r="2.700" fill="#fff" />
        </Icon>
      </button>
    </div>
  )
}

const APPS = [
  {
    name: 'Chrome',
    icon: (
      <Icon w={22} h={22}>
        <circle cx="11" cy="11" r="11" fill="#fbc116" />
        <path d="M11 11L1.500 5.500A11 11 0 0 1 20.500 5.500z" fill="#dc4437" />
        <path d="M1.500 5.500A11 11 0 0 0 11 22l4.800-8.300L6.200 13.700z" fill="#1b9e59" />
        <path d="M11 5.500h9.500L15.800 14z" fill="#fbc116" />
        <circle cx="11" cy="11" r="5.500" fill="#fff" />
        <circle cx="11" cy="11" r="4.300" fill="#4788f4" />
      </Icon>
    ),
  },
  {
    name: '文件资源管理器',
    icon: (
      <Icon w={22} h={19}>
        <path d="M0 1h8l2 2h12v15H0z" fill="#e9a820" />
        <path d="M0 4h22v14H0z" fill="#ffd766" />
        <path d="M4 19v-7l2-2h10l2 2v7h-4v-4H8v4z" fill="#3a94da" />
      </Icon>
    ),
  },
  {
    name: 'Visual Studio Code',
    icon: (
      <Icon w={24} h={24}>
        <path d="M17 0L0 15l2.500 2.500L18 6z" fill="#1177bb" />
        <path d="M0 9l2.500-2.500L18 18l-1 6z" fill="#1f8ad2" />
        <path d="M17 0l7 3v18l-7 3z" fill="#35a8f0" />
      </Icon>
    ),
  },
  {
    name: 'Excel',
    icon: (
      <Icon w={22} h={22}>
        <rect x="11" y="3" width="10.500" height="16" fill="#fff" stroke="#1e7145" />
        <path d="M14 5.500h2.500M14 8.500h2.500M14 11.500h2.500M14 14.500h2.500M17.500 5.500H20M17.500 8.500H20M17.500 11.500H20M17.500 14.500H20" stroke="#1e7145" strokeWidth="1.600" />
        <path d="M0 2.500L13 0v22L0 19.500z" fill="#1e7145" />
        <path d="M4 7l5 8M9 7l-5 8" stroke="#fff" strokeWidth="2" />
      </Icon>
    ),
  },
]

function Taskbar() {
  return (
    <div className="flex h-10 shrink-0 items-stretch bg-[#22323a] text-white">
      <button aria-label="开始" className="flex w-12 items-center justify-center">
        <Icon><path d="M0 2.200L7 1.200v6.300H0zM8 1l8-1v7.500H8zM0 8.500h7v6.300L0 13.800zM8 8.500h8V16l-8-1z" fill="#fff" /></Icon>
      </button>
      <button aria-label="搜索" className="flex w-12 items-center justify-center">
        <Icon><circle cx="10" cy="6" r="5.300" stroke="#fff" strokeWidth="1.400" /><path d="M6.500 9.500L.5 15.500" stroke="#fff" strokeWidth="1.400" /></Icon>
      </button>
      <button aria-label="任务视图" className="flex w-12 items-center justify-center">
        <Icon>
          <path d="M.5 0v2.500h10V0M.5 5.500h10v5H.5zM.5 16v-2.500h10V16M14.500 0v16" stroke="#fff" />
          <rect x="13" y="4" width="3" height="3" fill="#fff" />
        </Icon>
      </button>
      <div className="ml-[3px] flex">
        {APPS.map(app => (
          <button
            key={app.name}
            aria-label={app.name}
            className={`relative flex w-[49px] items-center justify-center ${app.name === 'Excel' ? 'border-r-4 border-[#36454c] bg-[#4b5960]' : ''}`}
          >
            {app.icon}
            <span className={`absolute bottom-0 h-[2px] bg-[#76b9ed] ${app.name === 'Excel' ? 'inset-x-0' : 'inset-x-1'}`} />
            {app.name === 'Chrome' && <span className="absolute bottom-0 right-1 h-[2px] w-2 bg-[#5a8bb5]" />}
          </button>
        ))}
      </div>
      <div className="ml-auto flex items-stretch">
        <button aria-label="显示隐藏的图标" className="flex w-6 items-center justify-center">
          <Icon w={12} h={8}><path d="M.5 7L6 1.500 11.500 7" stroke="#fff" strokeWidth="1.300" /></Icon>
        </button>
        <button aria-label="网络" className="flex w-6 items-center justify-center">
          <Icon w={16} h={14}><path d="M5 1.500h10.500v8H4M.5.500h4v4h-4zM2.500 5v8M9.500 10v3M5 13.500h9" stroke="#fff" /></Icon>
        </button>
        <button aria-label="音量" className="flex w-6 items-center justify-center">
          <Icon w={16} h={14}>
            <path d="M.5 5v4H3l4 4V1L3 5zM9 5c1 1 1 3 0 4M11 3c2 2 2 6 0 8M13 1c3 3 3 9 0 12" stroke="#fff" />
          </Icon>
        </button>
        <button className="w-6 pb-px text-[14px] font-bold">中</button>
        <button aria-label="输入法" className="flex w-[34px] items-center justify-center">
          <span className="h-4 w-4 rounded-[3px] bg-gradient-to-br from-[#3b6cf6] to-[#2ba3fb] text-[12px] font-bold leading-[15px]">王</span>
        </button>
        <button className="ml-2 w-[58px] whitespace-nowrap pb-px leading-[19px]">
          <span className="block">13:00</span>
          <span className="block">2022/5/5</span>
        </button>
        <button aria-label="通知" className="flex w-14 items-center justify-center">
          <Icon><path d="M.5.5h15v12h-5l-2.500 2.500-2.500-2.500h-5z" stroke="#fff" /></Icon>
        </button>
        <button aria-label="显示桌面" className="w-[5px] border-l border-[#6b767c]" />
      </div>
    </div>
  )
}

export default function App() {
  return (
    <div className="relative flex h-screen flex-col overflow-hidden bg-[#e6e6e6] font-['Noto_Sans','Noto_Sans_CJK_SC',sans-serif] text-[12px] text-[#444]">
      <div className="shrink-0 bg-[#217346]">
        <TitleBar />
        <RibbonTabs />
      </div>
      <div className="flex h-[95px] shrink-0 border-b border-[#d4d4d4] bg-[#f1f1f1] pt-1">
        <Clipboard />
        <FontGroup />
        <AlignGroup />
        <NumberGroup />
        <StyleGroup />
        <CellsGroup />
        <EditGroup />
        <button aria-label="折叠功能区" className="ml-auto self-end pb-[5px] pr-[10px]">
          <Icon w={9} h={6}><path d="M1 5l3.500-3.500L8 5" stroke="#666" strokeWidth="2" /></Icon>
        </button>
      </div>
      <FormulaBar />
      <Sheet />
      <SheetTabs />
      <StatusBar />
      <Taskbar />
      <InputBar />
      <div className="absolute right-[1px] top-[31px] flex h-[58px] w-[9px] flex-col justify-end overflow-hidden rounded-full border border-[#8a9a90] bg-[#0c2b1a]">
        <div className="flex flex-col gap-px bg-[#167a35] pb-px">
          {Array.from({ length: 12 }, (_, i) => (
            <span key={i} className="h-px shrink-0 bg-[#3df06a]" />
          ))}
        </div>
      </div>
    </div>
  )
}
